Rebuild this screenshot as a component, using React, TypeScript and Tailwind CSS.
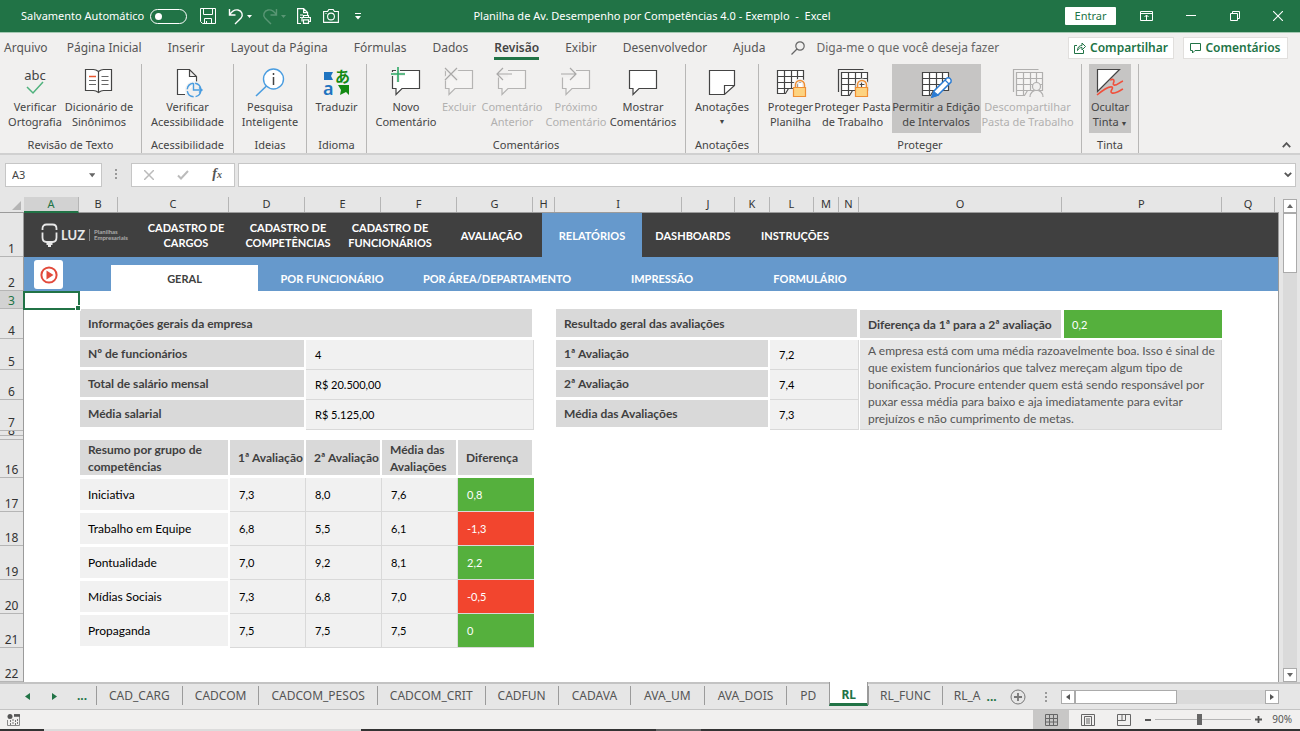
import type { ReactNode } from "react"

const UI_FONT = "font-['Noto_Sans',sans-serif]"
const SHEET_FONT = "font-['Lato',sans-serif]"

const tabs = ["Arquivo", "Página Inicial", "Inserir", "Layout da Página", "Fórmulas", "Dados", "Revisão", "Exibir", "Desenvolvedor", "Ajuda"]

const columns = [
    { name: "A", width: "w-[55px]" },
    { name: "B", width: "w-[39px]" },
    { name: "C", width: "w-[111px]" },
    { name: "D", width: "w-[76px]" },
    { name: "E", width: "w-[76px]" },
    { name: "F", width: "w-[76px]" },
    { name: "G", width: "w-[76px]" },
    { name: "H", width: "w-[22px]" },
    { name: "I", width: "w-[127px]" },
    { name: "J", width: "w-[53px]" },
    { name: "K", width: "w-[35px]" },
    { name: "L", width: "w-[44px]" },
    { name: "M", width: "w-[25px]" },
    { name: "N", width: "w-[20px]" },
    { name: "O", width: "flex-[203] min-w-0" },
    { name: "P", width: "flex-[160] min-w-0" },
    { name: "Q", width: "w-[53px]" },
]

const rows = [
    { name: "1", height: "h-[44px]" },
    { name: "2", height: "h-[34px]" },
    { name: "3", height: "h-[18px]" },
    { name: "4", height: "h-[30px]" },
    { name: "5", height: "h-[31px]" },
    { name: "6", height: "h-[30px]" },
    { name: "7", height: "h-[31px]" },
    { name: "8", height: "h-[5px]" },
    { name: "", height: "h-[4px]" },
    { name: "16", height: "h-[38px]" },
    { name: "17", height: "h-[34px]" },
    { name: "18", height: "h-[34px]" },
    { name: "19", height: "h-[34px]" },
    { name: "20", height: "h-[34px]" },
    { name: "21", height: "h-[34px]" },
    { name: "22", height: "h-[34px]" },
]

const mainMenu = [
    { label: "CADASTRO DE CARGOS", width: "w-[102px]" },
    { label: "CADASTRO DE COMPETÊNCIAS", width: "w-[102px]" },
    { label: "CADASTRO DE FUNCIONÁRIOS", width: "w-[102px]" },
    { label: "AVALIAÇÃO", width: "w-[101px]" },
    { label: "RELATÓRIOS", width: "w-[100px]", active: true },
    { label: "DASHBOARDS", width: "w-[102px]" },
    { label: "INSTRUÇÕES", width: "w-[102px]" },
]

const subMenu = [
    { label: "GERAL", width: "w-[147px]", active: true },
    { label: "POR FUNCIONÁRIO", width: "w-[148px]" },
    { label: "POR ÁREA/DEPARTAMENTO", width: "w-[182px]" },
    { label: "IMPRESSÃO", width: "w-[148px]" },
    { label: "FORMULÁRIO", width: "w-[148px]" },
]

const company = [
    ["Nº de funcionários", "4"],
    ["Total de salário mensal", "R$ 20.500,00"],
    ["Média salarial", "R$ 5.125,00"],
]

const results = [
    ["1ª Avaliação", "7,2"],
    ["2ª Avaliação", "7,4"],
    ["Média das Avaliações", "7,3"],
]

const groups = [
    { name: "Iniciativa", values: ["7,3", "8,0", "7,6"], diff: "0,8", up: true },
    { name: "Trabalho em Equipe", values: ["6,8", "5,5", "6,1"], diff: "-1,3", up: false },
    { name: "Pontualidade", values: ["7,0", "9,2", "8,1"], diff: "2,2", up: true },
    { name: "Mídias Sociais", values: ["7,3", "6,8", "7,0"], diff: "-0,5", up: false },
    { name: "Propaganda", values: ["7,5", "7,5", "7,5"], diff: "0", up: true },
]

const sheets = [
    { name: "CAD_CARG", padding: "px-3" },
    { name: "CADCOM", padding: "px-3" },
    { name: "CADCOM_PESOS", padding: "px-3" },
    { name: "CADCOM_CRIT", padding: "px-3" },
    { name: "CADFUN", padding: "px-3" },
    { name: "CADAVA", padding: "px-[13px]" },
    { name: "AVA_UM", padding: "px-[13px]" },
    { name: "AVA_DOIS", padding: "px-[13px]" },
    { name: "PD", padding: "px-[13px]" },
    { name: "RL", padding: "px-[11px]" },
    { name: "RL_FUNC", padding: "px-[11px]" },
]

function Icon({ size = 32, children }: { size?: number; children: ReactNode }) {
    return (
        <svg width={size} height={size} viewBox={`0 0 ${size} ${size}`} fill="none" stroke="#444" strokeWidth="1.2" aria-hidden="true" className="shrink-0 overflow-visible">
            {children}
        </svg>
    )
}

function Bubble({ color = "#444", fill = "#fff" }: { color?: string; fill?: string }) {
    return <path d="M2.5 5.5h27v18H12l-6 6v-6H2.5z" fill={fill} stroke={color} />
}

function SheetGrid({ color = "#444", fill = "#fff" }: { color?: string; fill?: string }) {
    return (
        <g stroke={color}>
            <path d="M2.5 5.5h26v18h-15l-3 5h-8z" fill={fill} />
            <path d="M2.5 11.5h26M2.5 17.5h26M2.5 23.5h12M9.5 5.5v23M16.5 5.5v18M22.5 5.5v18" />
        </g>
    )
}

function Padlock() {
    return (
        <g>
            <path d="M20.5 23v-3a4.5 4.5 0 0 1 9 0v3" stroke="#f1f0ef" strokeWidth="4" />
            <path d="M20.5 23v-3a4.5 4.5 0 0 1 9 0v3" stroke="#ef8e33" strokeWidth="1.5" />
            <path d="M18.5 22.5h12v9h-12z" fill="#fdd380" stroke="#ef8e33" />
        </g>
    )
}

function RibbonButton({ icon, lines, width, disabled, pressed, arrow }: {
    icon: ReactNode
    lines: string[]
    width: string
    disabled?: boolean
    pressed?: boolean
    arrow?: "inline" | "below"
}) {
    return (
        <button
            type="button"
            disabled={disabled}
            aria-pressed={pressed}
            className={`${width} flex h-[69px] shrink-0 flex-col items-center pt-[1px] text-[11px] leading-[15px] whitespace-nowrap ${pressed ? "bg-[#c6c5c4]" : ""} ${disabled ? "text-[#b1b0af]" : "text-[#444]"}`}
        >
            {icon}
            <span className="mt-[2px]">{lines[0]}</span>
            {lines[1] && (
                <span>
                    {lines[1]}
                    {arrow === "inline" && <span className="text-[7px]"> ▼</span>}
                </span>
            )}
            {arrow === "below" && <span className="text-[7px]">▼</span>}
        </button>
    )
}

function RibbonGroup({ label, width, align = "justify-center", children }: { label: string; width: string; align?: string; children: ReactNode }) {
    return (
        <section className={`${width} flex shrink-0 flex-col border-r border-[#b8b7b6]`}>
            <div className={`flex gap-0.5 ${align}`}>{children}</div>
            <h2 className="mt-[4px] text-center text-[11px] leading-[15px] text-[#444]">{label}</h2>
        </section>
    )
}

function TitleBar() {
    return (
        <header className="flex h-8 shrink-0 items-center bg-[#217346] text-[11px] text-white">
            <div className="flex flex-1 items-center pl-[21px]">
                <label htmlFor="autosave" className="whitespace-nowrap">Salvamento Automático</label>
                <span className="relative ml-[6px] flex h-[15px] w-[37px] items-center rounded-full border border-white pl-[4px]">
                    <span className="size-[7px] rounded-full bg-white" />
                    <input id="autosave" type="checkbox" className="absolute inset-0 opacity-0" />
                </span>
                <button type="button" aria-label="Salvar" className="ml-[13px]">
                    <svg width="16" height="16" viewBox="0 0 16 16" fill="none" stroke="#fff" aria-hidden="true">
                        <path d="M.5.5h15v15h-13l-2-2zM3.5.5v6h9v-6M4.5 15.5v-5h7v5M6.5 15.5v-2.5" />
                    </svg>
                </button>
                <button type="button" aria-label="Desfazer" className="ml-[12px] flex items-center gap-[3px]">
                    <svg width="16" height="17" viewBox="0 0 16 17" fill="none" stroke="#fff" strokeWidth="1.4" aria-hidden="true">
                        <path d="M1.5 1v6h6M1.5 7C4 3 7 1.5 10 2c4 .8 5.5 5 3 8l-6 6" />
                    </svg>
                    <svg width="5" height="3" viewBox="0 0 5 3" fill="#fff" aria-hidden="true"><path d="M0 0h5L2.5 3z" /></svg>
                </button>
                <button type="button" disabled aria-label="Refazer" className="ml-[10px] flex items-center gap-[3px] opacity-25">
                    <svg width="16" height="17" viewBox="0 0 16 17" fill="none" stroke="#fff" strokeWidth="1.4" aria-hidden="true">
                        <path d="M14.5 1v6h-6M14.5 7C12 3 9 1.5 6 2c-4 .8-5.5 5-3 8l6 6" />
                    </svg>
                    <svg width="5" height="3" viewBox="0 0 5 3" fill="#fff" aria-hidden="true"><path d="M0 0h5L2.5 3z" /></svg>
                </button>
                <button type="button" aria-label="Visualizar impressão" className="ml-[11px]">
                    <svg width="14" height="16" viewBox="0 0 14 16" fill="none" stroke="#fff" strokeWidth="1.2" aria-hidden="true">
                        <path d="M4 15.5H.6V.6h6l4 4V7M6.6.6v4h4M3 7h3M3 9.5h1.5" />
                        <path d="M6.5 9.5V7.5h5v2M5 13.5v-4h8.4v4h-1.9M6.5 11.8h5v3.6h-5z" />
                    </svg>
                </button>
                <button type="button" aria-label="Câmera" className="ml-[12px]">
                    <svg width="16" height="14" viewBox="0 0 16 14" fill="none" stroke="#fff" strokeWidth="1.1" aria-hidden="true">
                        <path d="M.6 2.5h4l1.2-2h4.4l1.2 2h4v10.9H.6z" />
                        <circle cx="8" cy="7.5" r="3.4" />
                        <path d="M2.5 4.5h1" />
                    </svg>
                </button>
                <button type="button" aria-label="Personalizar barra" className="ml-[16px]">
                    <svg width="6" height="7" viewBox="0 0 6 7" aria-hidden="true"><path d="M0 .5h6" stroke="#fff" /><path d="M0 3h6L3 6.5z" fill="#fff" /></svg>
                </button>
            </div>
            <h1 className="whitespace-pre">Planilha de Av. Desempenho por Competências 4.0 - Exemplo  -  Excel</h1>
            <div className="flex flex-1 items-center justify-end pr-[17px]">
                <button type="button" className="h-[18px] w-[51px] rounded-[1px] bg-white text-[11px] text-[#217346]">Entrar</button>
                <button type="button" aria-label="Opções da faixa" className="ml-[24px]">
                    <svg width="13" height="10" viewBox="0 0 13 10" fill="none" stroke="#fff" aria-hidden="true"><path d="M.5.5h12v9H.5zM.5 2.5h12M6.5 9V4M4.5 6l2-2 2 2" /></svg>
                </button>
                <button type="button" aria-label="Minimizar" className="ml-[33px]">
                    <svg width="10" height="10" viewBox="0 0 10 10" stroke="#fff" aria-hidden="true"><path d="M0 4.5h10" /></svg>
                </button>
                <button type="button" aria-label="Restaurar" className="ml-[34px]">
                    <svg width="10" height="10" viewBox="0 0 10 10" fill="none" stroke="#fff" aria-hidden="true"><path d="M.5 2.5h7v7h-7zM2.5 2.5v-2h7v7h-2" /></svg>
                </button>
                <button type="button" aria-label="Fechar" className="ml-[33px]">
                    <svg width="10" height="10" viewBox="0 0 10 10" stroke="#fff" strokeWidth="1.1" aria-hidden="true"><path d="M0 0l10 10M10 0L0 10" /></svg>
                </button>
            </div>
        </header>
    )
}

function RibbonTabs() {
    return (
        <nav className="flex h-[31px] shrink-0 items-center border-t border-[#a5c9b3] pl-1 text-[12px] text-[#555]">
            <div className="flex flex-1 items-center gap-[26px]">
                {tabs.map((tab) => (
                    <button
                        key={tab}
                        type="button"
                        className={`h-[24px] whitespace-nowrap first:-mr-[7px] ${tab === "Revisão" ? "border-y-[3px] border-t-transparent border-b-[#217346] font-semibold text-[#444]" : ""}`}
                    >
                        {tab}
                    </button>
                ))}
                <div className="flex flex-1 items-center gap-[11px]">
                    <svg width="14" height="14" viewBox="0 0 14 14" fill="none" stroke="#666" strokeWidth="1.2" aria-hidden="true"><circle cx="9" cy="5" r="4.2" /><path d="M6 8l-5.5 5.5" /></svg>
                    <input type="text" aria-label="Pesquisar comando" placeholder="Diga-me o que você deseja fazer" className="w-[220px] bg-transparent text-[12px] placeholder:text-[#666]" />
                </div>
            </div>
            <div className="flex gap-[9px] pr-3 font-semibold text-[#217346]">
                <button type="button" className="flex h-[22px] w-[106px] items-center justify-center gap-1 border border-[#e1dfdd] bg-white">
                    <svg width="12" height="12" viewBox="0 0 12 12" fill="none" stroke="#217346" aria-hidden="true"><path d="M3 3.5H.5v8h9V8M3.5 8.500C3.5 5 5.5 3.5 8 3.5V1l3.5 3.5L8 8V5.5C6 5.5 4.500 6.5 3.5 8.5z" /></svg>
                    Compartilhar
                </button>
                <button type="button" className="flex h-[22px] w-[105px] items-center justify-center gap-1 border border-[#e1dfdd] bg-white">
                    <svg width="11" height="11" viewBox="0 0 11 11" fill="none" stroke="#217346" aria-hidden="true"><path d="M.5.5h10v7H5l-2.5 2.5V7.5h-2z" /></svg>
                    Comentários
                </button>
            </div>
        </nav>
    )
}

function Ribbon() {
    return (
        <div className="flex h-[90px] shrink-0 pt-px">
            <RibbonGroup label="Revisão de Texto" width="w-[142px]" align="pl-[4px]">
                <RibbonButton width="w-[62px]" lines={["Verificar", "Ortografia"]} icon={
                    <Icon>
                        <text x="16" y="15" textAnchor="middle" fill="#444" stroke="none" fontSize="13">abc</text>
                        <path d="M8 22l6 6 10-11" stroke="#4fb27d" strokeWidth="1.5" />
                    </Icon>
                } />
                <RibbonButton width="w-[62px]" lines={["Dicionário de", "Sinônimos"]} icon={
                    <Icon>
                        <path d="M15.5 6.5c-2-1.5-3-2-5-2h-8v21h8c2 0 3 .5 5 2 2-1.5 3-2 5-2h8v-21h-8c-2 0-3 .5-5 2zM15.5 6.5v21" fill="#fff" />
                        <path d="M6 15.5h7M6 19.5h7M18.5 11.5h7M18.5 15.5h7M18.5 19.5h7" stroke="#666" />
                        <path d="M6 11.5h7" stroke="#e8572f" strokeWidth="1.5" />
                    </Icon>
                } />
            </RibbonGroup>
            <RibbonGroup label="Acessibilidade" width="w-[92px]">
                <RibbonButton width="w-[80px]" lines={["Verificar", "Acessibilidade"]} icon={
                    <Icon>
                        <path d="M13 29.5H5.5v-25h12l7 7v5M17.5 4.5v7h7" fill="#fff" />
                        <circle cx="22" cy="25" r="6.8" stroke="#f1f0ef" strokeWidth="4" />
                        <circle cx="22" cy="25" r="6.8" stroke="#4a9de0" strokeDasharray="9 2" strokeWidth="1.4" />
                        <path d="M21.5 18v7h8M27 22.5l3 2.5-3 2.5" stroke="#4a9de0" strokeWidth="1.4" />
                    </Icon>
                } />
            </RibbonGroup>
            <RibbonGroup label="Ideias" width="w-[73px]">
                <RibbonButton width="w-[62px]" lines={["Pesquisa", "Inteligente"]} icon={
                    <Icon>
                        <circle cx="19.5" cy="14" r="10" fill="#fff" stroke="#4a9de0" strokeWidth="1.4" />
                        <path d="M12.5 21L2 31" stroke="#4a9de0" strokeWidth="1.6" />
                        <path d="M19.5 12v8M19.5 8v2" strokeWidth="1.5" />
                    </Icon>
                } />
            </RibbonGroup>
            <RibbonGroup label="Idioma" width="w-[60px]">
                <RibbonButton width="w-[48px]" lines={["Traduzir"]} icon={
                    <Icon>
                        <path d="M3 7h9l-2 4 2 4H3z" fill="#1f74c0" stroke="none" />
                        <text x="2" y="30" fill="#1f74c0" stroke="none" fontSize="18" fontWeight="600">a</text>
                        <text x="14" y="17" fill="#138a13" stroke="none" fontSize="15" fontWeight="700" fontFamily="'Noto Sans CJK JP', sans-serif">あ</text>
                        <path d="M17 20h11v10l-3-3-6 3 1-5z" fill="#138a13" stroke="none" />
                    </Icon>
                } />
            </RibbonGroup>
            <RibbonGroup label="Comentários" width="w-[319px]">
                <RibbonButton width="w-[62px]" lines={["Novo", "Comentário"]} icon={
                    <Icon>
                        <Bubble />
                        <path d="M8 1v16M0 9h15" stroke="#f1f0ef" strokeWidth="4" />
                        <path d="M8 2v15M1 9h14" stroke="#2fa866" strokeWidth="1.6" />
                    </Icon>
                } />
                <RibbonButton disabled width="w-[40px]" lines={["Excluir"]} icon={
                    <Icon>
                        <Bubble color="#b5b4b3" fill="#f5f4f3" />
                        <path d="M2 2l13 13M15 2L2 15" stroke="#f1f0ef" strokeWidth="5" />
                        <path d="M2 3l12 12M14 3L2 15" stroke="#a9a8a7" />
                    </Icon>
                } />
                <RibbonButton disabled width="w-[62px]" lines={["Comentário", "Anterior"]} icon={
                    <Icon>
                        <Bubble color="#b5b4b3" fill="#f5f4f3" />
                        <path d="M0 8h12" stroke="#f1f0ef" strokeWidth="9" />
                        <path d="M1 9h15M7 3L1 9l6 6" stroke="#a9a8a7" />
                    </Icon>
                } />
                <RibbonButton disabled width="w-[62px]" lines={["Próximo", "Comentário"]} icon={
                    <Icon>
                        <Bubble color="#b5b4b3" fill="#f5f4f3" />
                        <path d="M0 8h16" stroke="#f1f0ef" strokeWidth="9" />
                        <path d="M1 9h15M10 3l6 6-6 6" stroke="#a9a8a7" />
                    </Icon>
                } />
                <RibbonButton width="w-[68px]" lines={["Mostrar", "Comentários"]} icon={<Icon><Bubble /></Icon>} />
            </RibbonGroup>
            <RibbonGroup label="Anotações" width="w-[73px]">
                <RibbonButton width="w-[60px]" arrow="below" lines={["Anotações"]} icon={
                    <Icon><path d="M3.5 5.5h25v15l-10 9h-15zM18.5 29.5v-9h10" fill="#fff" /></Icon>
                } />
            </RibbonGroup>
            <RibbonGroup label="Proteger" width="w-[323px]">
                <RibbonButton width="w-[46px]" lines={["Proteger", "Planilha"]} icon={<Icon><SheetGrid /><Padlock /></Icon>} />
                <RibbonButton width="w-[74px]" lines={["Proteger Pasta", "de Trabalho"]} icon={
                    <Icon>
                        <path d="M1.5 27V4.5h25" />
                        <g transform="translate(2 2)"><SheetGrid /></g>
                        <Padlock />
                    </Icon>
                } />
                <RibbonButton pressed width="w-[89px]" lines={["Permitir a Edição", "de Intervalos"]} icon={
                    <Icon>
                        <g transform="translate(0 2)"><SheetGrid /></g>
                        <path d="M12 32l2-6L27 13c2-1 5 1 4 4L18 30z" fill="#fff" stroke="#2b7cd3" strokeWidth="1.5" />
                        <path d="M12 32l2-5 4 3zM25 15l4 4" fill="#2b7cd3" stroke="#2b7cd3" />
                    </Icon>
                } />
                <RibbonButton disabled width="w-[90px]" lines={["Descompartilhar", "Pasta de Trabalho"]} icon={
                    <Icon>
                        <path d="M1.5 27V4.5h25" stroke="#b0afae" />
                        <g transform="translate(2 2)"><SheetGrid color="#b0afae" fill="#f5f4f3" /></g>
                        <path d="M18 32c0-9 13-9 13 0" stroke="#b0afae" fill="#f1f0ef" />
                        <circle cx="24.5" cy="21.5" r="4" stroke="#b0afae" fill="#f1f0ef" />
                    </Icon>
                } />
            </RibbonGroup>
            <RibbonGroup label="Tinta" width="w-[57px]">
                <RibbonButton pressed width="w-[42px]" arrow="inline" lines={["Ocultar", "Tinta"]} icon={
                    <Icon>
                        <path d="M3.5 4.5h22l-22 22z" fill="#fff" />
                        <path d="M3 30c6-5 12-9 15-8 2 1-3 5 0 6s7-2 11-4M16 15c2-1 4-1 4 1s-2 3 0 4 6-3 9-4" stroke="#f0503c" strokeWidth="1.6" />
                    </Icon>
                } />
            </RibbonGroup>
            <button type="button" aria-label="Recolher faixa" className="mr-[9px] mb-[5px] ml-auto self-end">
                <svg width="9" height="6" viewBox="0 0 9 6" fill="none" stroke="#555" strokeWidth="1.8" aria-hidden="true"><path d="M.8 5.2l3.7-4 3.7 4" /></svg>
            </button>
        </div>
    )
}

function FormulaBar() {
    return (
        <div className="flex h-[44px] shrink-0 items-start border-t-2 border-[#d0d0d0] pt-[8px] pr-1 pl-[5px]">
            <div className="flex h-[24px] w-[97px] items-center border border-[#c6c6c6] bg-white pr-[6px] pl-[6px]">
                <input aria-label="Caixa de nome" defaultValue="A3" className="w-full text-[11px] text-[#444]" />
                <svg width="7" height="5" viewBox="0 0 7 5" fill="#666" aria-hidden="true"><path d="M0 0h7L3.5 4.5z" /></svg>
            </div>
            <svg width="3" height="12" viewBox="0 0 3 12" fill="#999" aria-hidden="true" className="mx-[13px] mt-[6px]"><path d="M0 0h2v2H0zM0 4h2v2H0zM0 8h2v2H0z" /></svg>
            <div className="flex h-[24px] w-[104px] items-center justify-between border border-[#c6c6c6] bg-white px-[12px]">
                <button type="button" aria-label="Cancelar">
                    <svg width="10" height="10" viewBox="0 0 10 10" stroke="#bbb" strokeWidth="1.5" aria-hidden="true"><path d="M0 0l10 10M10 0L0 10" /></svg>
                </button>
                <button type="button" aria-label="Inserir">
                    <svg width="12" height="10" viewBox="0 0 12 10" fill="none" stroke="#bbb" strokeWidth="2" aria-hidden="true"><path d="M1 5.5l3 3L11 1" /></svg>
                </button>
                <button type="button" className="pb-[2px] font-['Liberation_Serif',serif] text-[14px] leading-none font-bold text-[#555] italic">f<span className="text-[10px]">x</span></button>
            </div>
            <div className="ml-[3px] flex h-[24px] flex-1 items-center border border-[#c6c6c6] bg-white pr-[3px]">
                <input aria-label="Barra de fórmulas" className="min-w-0 flex-1" />
                <svg width="8" height="6" viewBox="0 0 8 6" fill="none" stroke="#555" strokeWidth="1.8" aria-hidden="true"><path d="M.8.8L4 4 7.2.8" /></svg>
            </div>
        </div>
    )
}

function Logo() {
    return (
        <div className="flex w-[111px] items-center pl-[17px] text-[#e8e8e8]">
            <svg width="17" height="24" viewBox="0 0 17 24" fill="none" stroke="#e8e8e8" strokeWidth="1.8" aria-hidden="true">
                <path d="M1.5 7V5.5C1.5 3 3 1.5 5.5 1.5h6c2.5 0 4 1.5 4 4V7M1.5 9.5v5c0 3 2 4.5 4 4.5h6c2 0 4-1.5 4-4.5v-5" />
                <path d="M5.5 21h6M7 23h3" />
            </svg>
            <span className="ml-[3px] text-[13px]">LUZ</span>
            <span className="ml-1 border-l border-[#888] pl-1 text-[6px] leading-[6px] text-[#aaa]">Planilhas<br />Empresariais</span>
        </div>
    )
}

function MenuBars() {
    return (
        <>
            <nav className="flex h-[44px] bg-[#404040] text-[11px] leading-[15px] font-bold text-white">
                <Logo />
                {mainMenu.map((item) => (
                    <a key={item.label} href="#" className={`${item.width} flex items-center justify-center text-center ${item.active ? "bg-[#6699cc]" : ""}`}>
                        <span className="max-w-[92px]">{item.label}</span>
                    </a>
                ))}
            </nav>
            <nav className="flex h-[34px] bg-[#6699cc] text-[11px] font-bold text-white">
                <button type="button" aria-label="Vídeo" className="mt-[3px] ml-[10px] mr-[48px] flex size-[29px] items-center justify-center rounded-[3px] bg-white">
                    <svg width="18" height="18" viewBox="0 0 18 18" aria-hidden="true"><circle cx="9" cy="9" r="7.6" fill="none" stroke="#e24a3b" strokeWidth="2" /><path d="M6.5 4.5v9L13.5 9z" fill="#e24a3b" /></svg>
                </button>
                {subMenu.map((item) => (
                    <a key={item.label} href="#" className={`${item.width} mt-[8px] flex items-center justify-center pt-[2px] ${item.active ? "bg-white text-[#404040]" : ""}`}>
                        {item.label}
                    </a>
                ))}
            </nav>
        </>
    )
}

const headCell = "border-r-2 border-b-[3px] border-white bg-[#d9d9d9] pl-2 text-left font-bold text-[#404040]"
const valueCell = "border-r border-b border-[#d9d9d9] bg-[#f1f1f1] pl-[9px] text-[11px] text-black"

function SummaryTable({ title, data, labelWidth }: { title: string; data: string[][]; labelWidth: string }) {
    return (
        <table className="w-full table-fixed border-separate border-spacing-0">
            <colgroup>
                <col className={labelWidth} />
                <col />
            </colgroup>
            <thead>
                <tr className="h-[31px]"><th colSpan={2} className={headCell}>{title}</th></tr>
            </thead>
            <tbody>
                {data.map(([label, value]) => (
                    <tr key={label} className="h-[30px]">
                        <th scope="row" className={headCell}>{label}</th>
                        <td className={valueCell}>{value}</td>
                    </tr>
                ))}
            </tbody>
        </table>
    )
}

function Report() {
    return (
        <div className="flex pr-[56px] pl-[56px] text-[12px] leading-[17px]">
            <div className="w-[454px] shrink-0">
                <SummaryTable title="Informações gerais da empresa" data={company} labelWidth="w-[226px]" />
                <table className="mt-[10px] w-full table-fixed border-separate border-spacing-0">
                    <colgroup>
                        <col className="w-[150px]" />
                        <col span={4} className="w-[76px]" />
                    </colgroup>
                    <thead>
                        <tr className="h-[38px] whitespace-nowrap">
                            <th className={headCell}>Resumo por grupo de<br />competências</th>
                            <th className={headCell}>1ª Avaliação</th>
                            <th className={headCell}>2ª Avaliação</th>
                            <th className={headCell}>Média das<br />Avaliações</th>
                            <th className={headCell}>Diferença</th>
                        </tr>
                    </thead>
                    <tbody>
                        {groups.map((group) => (
                            <tr key={group.name} className="h-[34px]">
                                <th scope="row" className="border-t border-r-2 border-b-2 border-white bg-[#f1f1f1] pb-px pl-2 text-left font-normal text-black">{group.name}</th>
                                {group.values.map((value, i) => (
                                    <td key={i} className={valueCell}>{value}</td>
                                ))}
                                <td className={`border-b border-[#d9d9d9] pl-[9px] text-[11px] text-white ${group.up ? "bg-[#55b03d]" : "bg-[#f2452e]"}`}>{group.diff}</td>
                            </tr>
                        ))}
                    </tbody>
                </table>
            </div>
            <div className="ml-[22px] w-[303px] shrink-0">
                <SummaryTable title="Resultado geral das avaliações" data={results} labelWidth="w-[214px]" />
            </div>
            <div className="ml-px min-w-0 flex-1">
                <div className="flex h-[31px] gap-[3px] pt-px pb-[2px]">
                    <h3 className="flex w-[201px] shrink-0 items-center bg-[#d9d9d9] pl-2 font-bold whitespace-nowrap text-[#404040]">Diferença da 1ª para a 2ª avaliação</h3>
                    <output className="flex flex-1 items-center bg-[#55b03d] pl-2 text-[11px] text-white">0,2</output>
                </div>
                <p className="min-h-[90px] border-r border-b border-[#d9d9d9] bg-[#e6e6e6] pt-[2px] pl-[8px] text-[12px] text-[#555]">
                    A empresa está com uma média razoavelmente boa. Isso é sinal de que existem funcionários que talvez mereçam algum tipo de bonificação. Procure entender quem está sendo responsável por puxar essa média para baixo e aja imediatamente para evitar prejuízos e não cumprimento de metas.
                </p>
            </div>
        </div>
    )
}

function Worksheet() {
    return (
        <div className="flex min-h-0 flex-1">
            <div className="flex min-w-0 flex-1 flex-col">
                <div className="flex h-[16px] shrink-0 border-b border-[#9b9b9b] text-[11px] leading-[14px] text-[#333]">
                    <div className="flex w-6 items-end justify-end pr-[3px] pb-[2px]">
                        <svg width="9" height="9" viewBox="0 0 9 9" fill="#b5b5b5" aria-hidden="true"><path d="M9 0v9H0z" /></svg>
                    </div>
                    {columns.map((col) => (
                        <div
                            key={col.name}
                            className={`${col.width} border-r border-[#b5b5b5] text-center ${col.name === "A" ? "h-[16px] border-b-2 border-b-[#217346] bg-[#d2d2d2] text-[#217346]" : ""}`}
                        >
                            {col.name}
                        </div>
                    ))}
                    <div className="w-1" />
                </div>
                <div className="flex min-h-0 flex-1">
                    <div className="flex w-6 shrink-0 flex-col border-r border-[#9b9b9b] text-[12px] text-[#333]">
                        {rows.map((row, i) => (
                            <div
                                key={i}
                                className={`${row.height} flex shrink-0 items-end justify-center overflow-hidden border-b border-[#b5b5b5] ${row.name === "8" ? "leading-[9px]" : "leading-[14px]"} ${row.name === "3" ? "bg-[#d2d2d2] text-[#217346]" : ""}`}
                            >
                                {row.name}
                            </div>
                        ))}
                    </div>
                    <div className={`min-w-0 flex-1 border-r border-[#9b9b9b] bg-white ${SHEET_FONT}`}>
                        <MenuBars />
                        <div className="h-[18px]">
                            <div className="relative -ml-px h-[19px] w-[57px] border-2 border-[#217346]">
                                <span className="absolute -right-[3px] -bottom-[3px] size-[6px] border border-white bg-[#217346]" />
                            </div>
                        </div>
                        <Report />
                    </div>
                </div>
            </div>
            <div className="flex w-[21px] flex-col items-center pt-[2px]">
                <button type="button" aria-label="Rolar para cima" className="flex h-[14px] w-[14px] items-center justify-center border border-[#ababab] bg-white">
                    <svg width="6" height="4" viewBox="0 0 6 4" fill="#666" aria-hidden="true"><path d="M0 4h6L3 0z" /></svg>
                </button>
                <div className="w-[14px] flex-1 bg-[#dadada]">
                    <div className="h-[60px] border border-[#ababab] bg-white" />
                </div>
                <button type="button" aria-label="Rolar para baixo" className="flex h-[14px] w-[14px] items-center justify-center border border-[#ababab] bg-white">
                    <svg width="6" height="4" viewBox="0 0 6 4" fill="#666" aria-hidden="true"><path d="M0 0h6L3 4z" /></svg>
                </button>
            </div>
        </div>
    )
}

function SheetTabs() {
    return (
        <div className="flex h-[28px] shrink-0 border-t-2 border-b border-[#c3c3c3] text-[12px] text-[#555]">
            <div className="flex w-[96px] shrink-0 items-center pb-px pl-[25px] text-[#217346]">
                <button type="button" aria-label="Planilha anterior"><svg width="5" height="7" viewBox="0 0 5 7" fill="#217346" aria-hidden="true"><path d="M5 0v7L0 3.5z" /></svg></button>
                <button type="button" aria-label="Próxima planilha" className="ml-[22px]"><svg width="5" height="7" viewBox="0 0 5 7" fill="#217346" aria-hidden="true"><path d="M0 0v7l5-3.5z" /></svg></button>
                <button type="button" className="ml-[20px] font-bold">...</button>
            </div>
            <div role="tablist" className="flex">
                {sheets.map(({ name, padding }) =>
                    name === "RL" ? (
                        <button key={name} type="button" role="tab" aria-selected="true" className={`${padding} -mt-[2px] h-[24px] border-x border-b-[3px] border-x-[#9b9b9b] border-b-[#217346] bg-white pt-[5px] leading-[16px] font-bold text-[#217346]`}>{name}</button>
                    ) : (
                        <button key={name} type="button" role="tab" aria-selected="false" className={`${padding} mt-[2px] h-[19px] border-l border-[#9b9b9b] whitespace-nowrap`}>{name}</button>
                    )
                )}
                <button type="button" role="tab" aria-selected="false" className="mt-[2px] h-[19px] border-l border-[#9b9b9b] pl-[11px]">RL_A</button>
            </div>
            <div className="flex flex-1 items-center pl-[6px]">
                <span className="font-bold text-[#217346]">...</span>
                <button type="button" aria-label="Nova planilha" className="ml-[13px]">
                    <svg width="16" height="16" viewBox="0 0 16 16" fill="none" stroke="#777" aria-hidden="true"><circle cx="8" cy="8" r="7" /><path d="M8 4v8M4 8h8" strokeWidth="1.8" /></svg>
                </button>
                <svg width="2" height="10" viewBox="0 0 2 10" fill="#999" aria-hidden="true" className="ml-[19px]"><path d="M0 0h2v2H0zM0 4h2v2H0zM0 8h2v2H0z" /></svg>
            </div>
            <div className="mr-[21px] flex w-[218px] shrink-0 items-center">
                <button type="button" aria-label="Rolar para a esquerda" className="flex h-[14px] w-[14px] items-center justify-center border border-[#ababab] bg-white">
                    <svg width="4" height="6" viewBox="0 0 4 6" fill="#555" aria-hidden="true"><path d="M4 0v6L0 3z" /></svg>
                </button>
                <div className="h-[14px] flex-1 bg-[#dadada]">
                    <div className="h-full w-[102px] border border-[#ababab] bg-white" />
                </div>
                <button type="button" aria-label="Rolar para a direita" className="flex h-[14px] w-[14px] items-center justify-center border border-[#ababab] bg-white">
                    <svg width="4" height="6" viewBox="0 0 4 6" fill="#555" aria-hidden="true"><path d="M0 0v6l4-3z" /></svg>
                </button>
            </div>
        </div>
    )
}

function StatusBar() {
    return (
        <footer className="flex h-[19px] shrink-0 items-center bg-[#f1f0ef] text-[10px] text-[#555]">
            <svg width="13" height="12" viewBox="0 0 13 12" fill="none" stroke="#555" aria-hidden="true" className="ml-[7px]">
                <circle cx="3" cy="2.5" r="2.5" fill="#555" stroke="none" />
                <path d="M7 .5h5.5v11H.5V6" stroke="#888" />
                <path d="M7 1.5h6" strokeWidth="2.5" />
                <path d="M3.5 6v5M6 5v6M8.5 6v5M10.5 5v6" stroke="#777" strokeDasharray="2 1" />
            </svg>
            <button type="button" aria-label="Normal" className="ml-auto flex h-full w-[36px] items-center justify-center bg-[#c8c7c6]">
                <svg width="13" height="12" viewBox="0 0 13 12" fill="none" stroke="#666" aria-hidden="true"><path d="M.5.5h12v11H.5zM.5 4.5h12M.5 8h12M4.5.5v11M8.5.5v11" /></svg>
            </button>
            <button type="button" aria-label="Layout da página" className="flex w-[37px] justify-center">
                <svg width="14" height="12" viewBox="0 0 14 12" fill="none" stroke="#666" aria-hidden="true"><path d="M.5.5h13v11H.5zM3.5 2.5h7v9h-7zM5 5h4M5 7h4M5 9h4" /></svg>
            </button>
            <button type="button" aria-label="Quebra de página" className="flex w-[35px] justify-center">
                <svg width="14" height="12" viewBox="0 0 14 12" fill="none" stroke="#666" aria-hidden="true"><path d="M.5.5h13v11H.5zM.5 6.5h8v-6M5 .5v6" /></svg>
            </button>
            <button type="button" aria-label="Menos zoom" className="ml-[4px]">
                <svg width="6" height="6" viewBox="0 0 6 6" stroke="#555" strokeWidth="2" aria-hidden="true"><path d="M0 3h6" /></svg>
            </button>
            <input
                type="range"
                aria-label="Zoom"
                min="10"
                max="190"
                defaultValue="92"
                className="mx-[4px] h-[11px] w-[96px] appearance-none bg-[linear-gradient(#b5b5b5,#b5b5b5)] bg-[length:100%_1px] bg-center bg-no-repeat [&::-webkit-slider-thumb]:h-[11px] [&::-webkit-slider-thumb]:w-[5px] [&::-webkit-slider-thumb]:appearance-none [&::-webkit-slider-thumb]:bg-[#666]"
            />
            <button type="button" aria-label="Mais zoom">
                <svg width="7" height="7" viewBox="0 0 7 7" stroke="#555" strokeWidth="1.8" aria-hidden="true"><path d="M0 3.5h7M3.5 0v7" /></svg>
            </button>
            <span className="mr-[8px] ml-[10px]">90%</span>
        </footer>
    )
}

export default function App() {
    return (
        <div className={`flex h-screen flex-col overflow-hidden bg-[#e6e6e6] ${UI_FONT}`}>
            <TitleBar />
            <div className="shrink-0 bg-[#f1f0ef]">
                <RibbonTabs />
                <Ribbon />
            </div>
            <FormulaBar />
            <Worksheet />
            <SheetTabs />
            <StatusBar />
            <div className="flex h-[2px] shrink-0 bg-[#333]">
                <div className="w-[44px]" />
                <div className="w-[317px] bg-[#dcdcdc]" />
                <div className="w-[295px]" />
                <div className="w-[45px] bg-[#666]" />
            </div>
        </div>
    )
}
